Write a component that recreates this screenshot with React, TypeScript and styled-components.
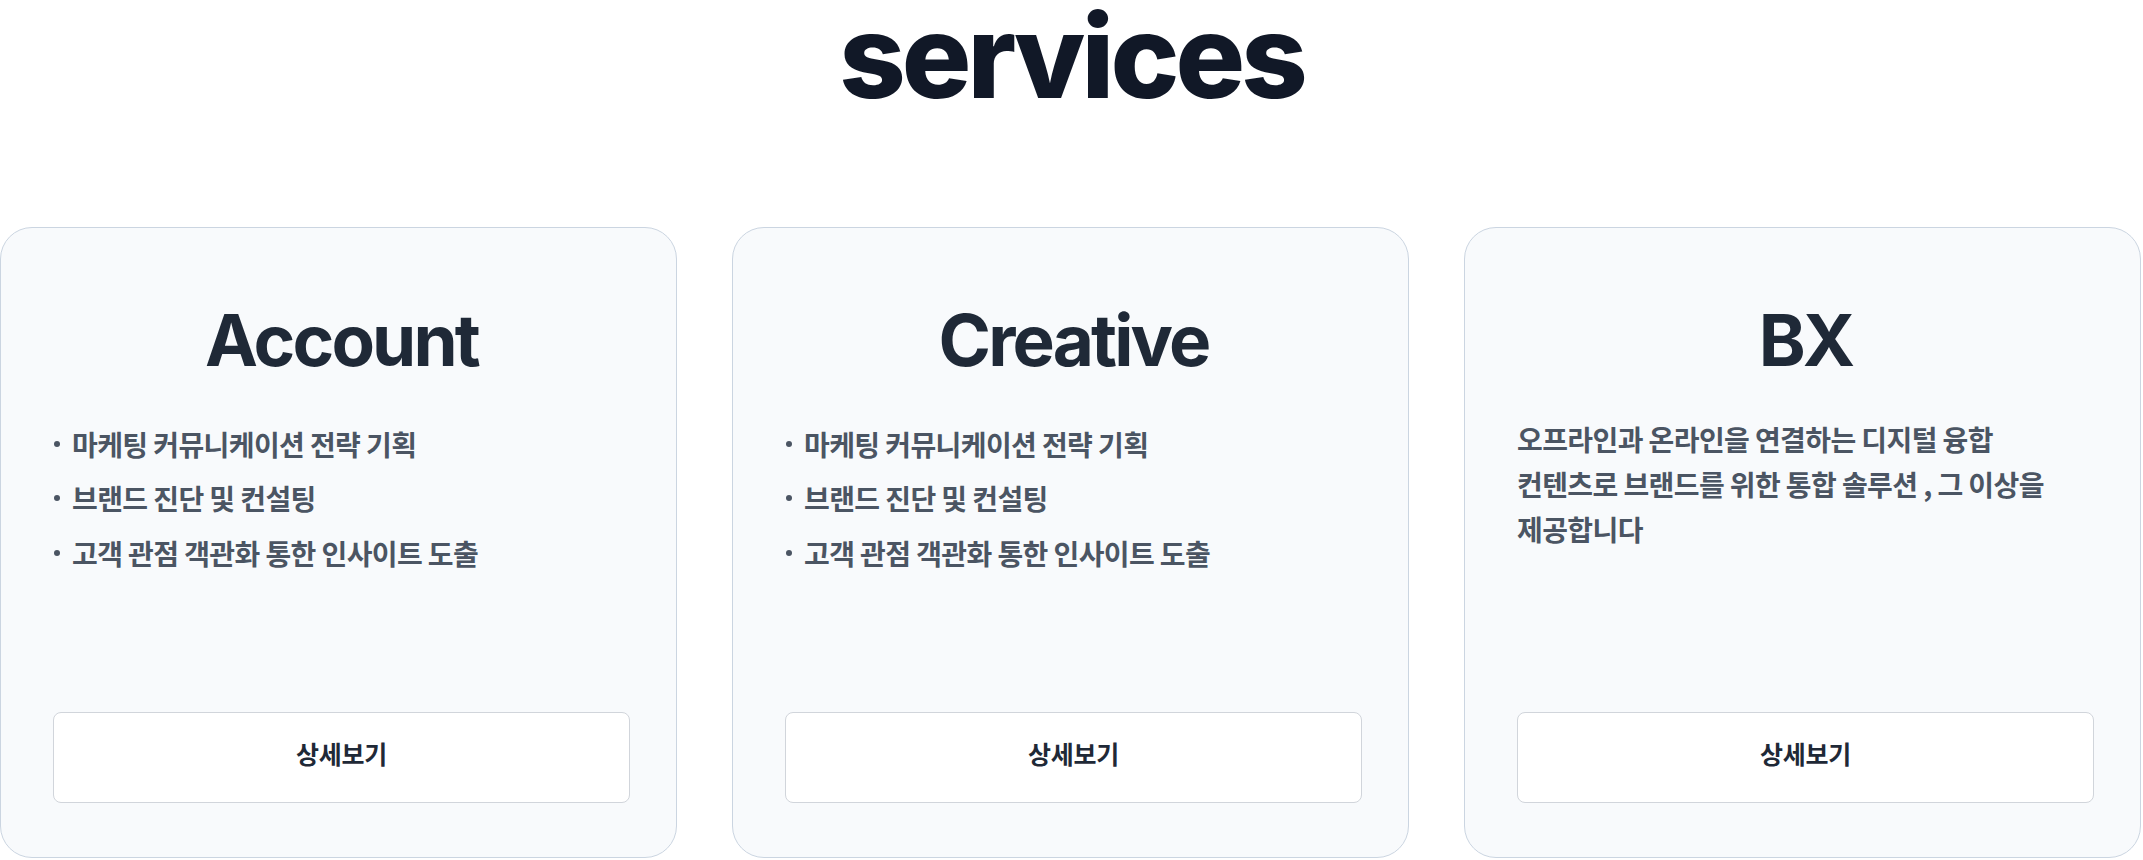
import React from "react";
import styled, { createGlobalStyle } from "styled-components";

const GlobalStyle = createGlobalStyle`
  html, body {
    margin: 0;
    padding: 0;
    background: #ffffff;
  }
  body {
    font-family: "Noto Sans CJK KR", "Inter", sans-serif;
    -webkit-font-smoothing: antialiased;
  }
  * { box-sizing: border-box; }
`;

const Section = styled.section`
  width: 2143px;
  display: flex;
  flex-direction: column;
  align-items: stretch;
`;

const Heading = styled.h1`
  margin: 0;
  font-family: "Inter", sans-serif;
  font-weight: 800;
  font-size: 116px;
  line-height: 0.98;
  letter-spacing: -0.034em;
  color: #111827;
  text-align: center;
`;

const CardGrid = styled.div`
  margin-top: 113px;
  display: grid;
  grid-template-columns: repeat(3, 677px);
  column-gap: 55px;
`;

const Card = styled.article`
  min-height: 631px;
  display: flex;
  flex-direction: column;
  padding: 77px 46px 54px 52px;
  background: #f8fafc;
  border: 1px solid #cbd5e1;
  border-radius: 32px;
`;

const CardTitle = styled.h2`
  margin: 0 0 41px;
  font-family: "Inter", sans-serif;
  font-weight: 700;
  font-size: 71px;
  line-height: 1;
  letter-spacing: -0.04em;
  color: #1f2937;
  text-align: center;
`;

const List = styled.ul`
  margin: 0;
  padding: 0;
  list-style: none;
`;

const Item = styled.li`
  display: flex;
  align-items: center;
  font-family: "Noto Sans CJK KR", sans-serif;
  font-weight: 600;
  font-size: 28px;
  line-height: 54.5px;
  letter-spacing: -0.6px;
  color: #4b5563;

  &::before {
    content: "";
    flex: none;
    width: 6px;
    height: 6px;
    margin: 0 12px 0 1px;
    border-radius: 50%;
    background: #4b5563;
  }
`;

const Description = styled.p`
  margin: 0;
  font-family: "Noto Sans CJK KR", sans-serif;
  font-weight: 600;
  font-size: 28px;
  line-height: 45px;
  letter-spacing: -0.6px;
  word-break: keep-all;
  color: #4b5563;
`;

const DetailButton = styled.button`
  margin-top: auto;
  height: 91px;
  width: 100%;
  display: flex;
  align-items: center;
  justify-content: center;
  padding: 0 0 8px;
  background: #ffffff;
  border: 1px solid #d1d5db;
  border-radius: 8px;
  font-family: "Noto Sans CJK KR", sans-serif;
  font-weight: 700;
  font-size: 25px;
  letter-spacing: -0.2px;
  color: #1f2937;
  cursor: pointer;
`;

type Service = {
  title: string;
  items?: string[];
  description?: string;
};

const services: Service[] = [
  {
    title: "Account",
    items: [
      "마케팅 커뮤니케이션 전략 기획",
      "브랜드 진단 및 컨설팅",
      "고객 관점 객관화 통한 인사이트 도출",
    ],
  },
  {
    title: "Creative",
    items: [
      "마케팅 커뮤니케이션 전략 기획",
      "브랜드 진단 및 컨설팅",
      "고객 관점 객관화 통한 인사이트 도출",
    ],
  },
  {
    title: "BX",
    description:
      "오프라인과 온라인을 연결하는 디지털 융합 컨텐츠로 브랜드를 위한 통합 솔루션 , 그 이상을 제공합니다",
  },
];

export default function App() {
  return (
    <>
      <GlobalStyle />
      <Section>
        <Heading>services</Heading>
        <CardGrid>
          {services.map((s) => (
            <Card key={s.title}>
              <CardTitle>{s.title}</CardTitle>
              {s.items ? (
                <List>
                  {s.items.map((it) => (
                    <Item key={it}>{it}</Item>
                  ))}
                </List>
              ) : (
                <Description>{s.description}</Description>
              )}
              <DetailButton type="button">상세보기</DetailButton>
            </Card>
          ))}
        </CardGrid>
      </Section>
    </>
  );
}
